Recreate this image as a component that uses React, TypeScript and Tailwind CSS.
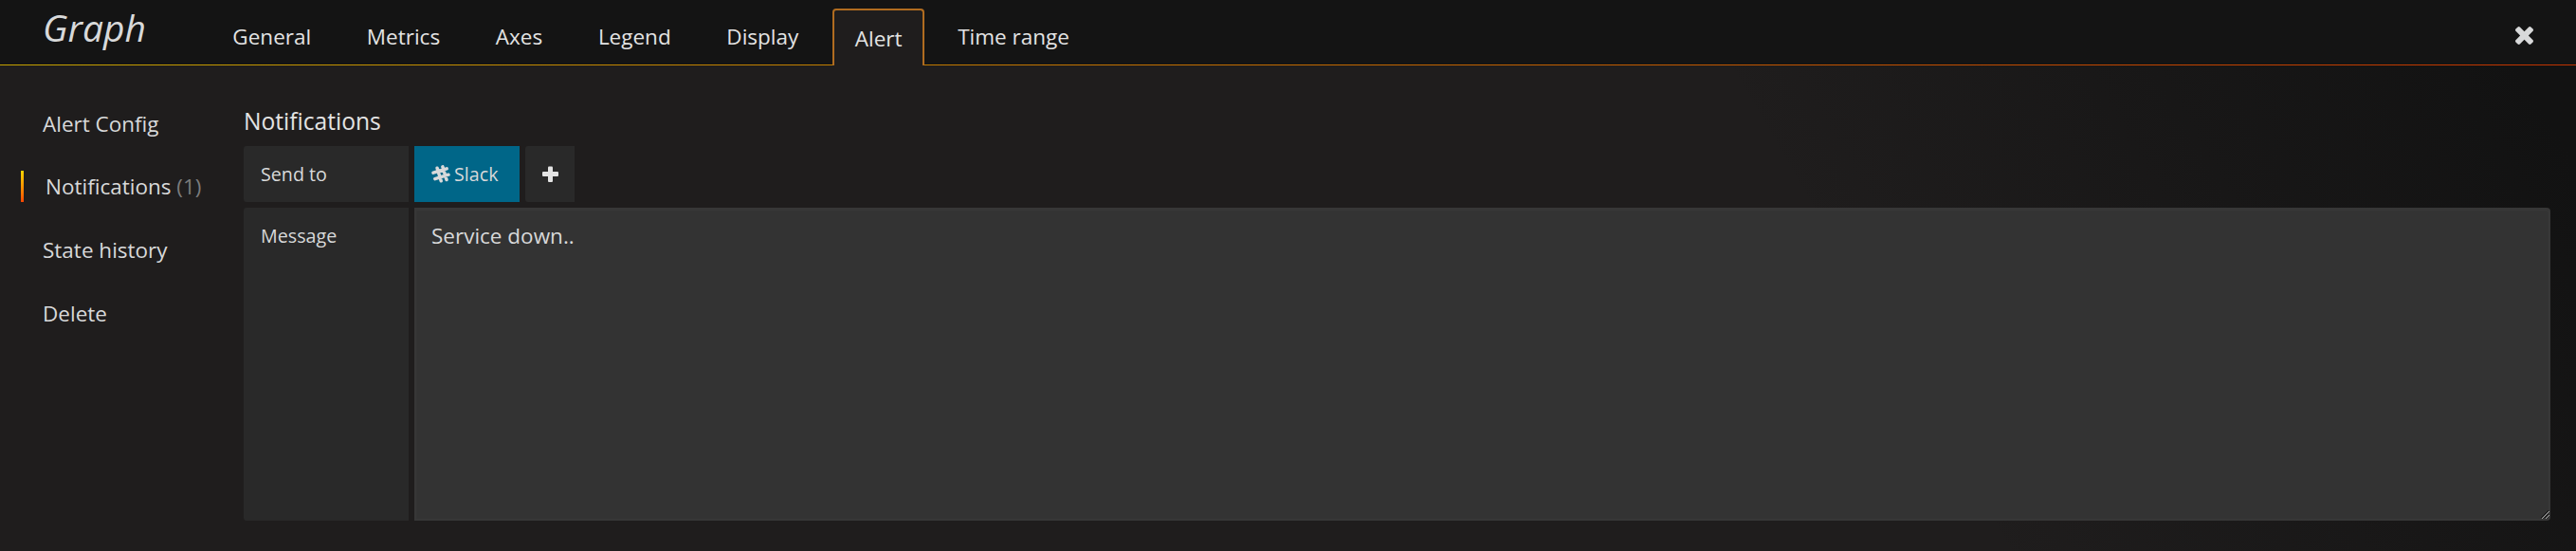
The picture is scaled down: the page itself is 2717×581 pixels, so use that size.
import React from "react";

const tabsBefore = ["General", "Metrics", "Axes", "Legend", "Display"];

function SlackMark() {
  return (
    <svg viewBox="0 0 20 20" className="h-[20px] w-[20px]" fill="none" stroke="#d8d9da" strokeWidth="3.5" strokeLinecap="round">
      <path d="M6.1 3.2 10.2 16.8M11.9 1.9 16 15.5M2 8.2 16.2 3.9M3.8 14.6 18 10.2" />
    </svg>
  );
}

function PlusMark() {
  return (
    <svg viewBox="0 0 17 17" className="h-[17px] w-[17px]" fill="#e3e3e3">
      <rect x="0" y="6" width="17" height="5" rx="1.1" />
      <rect x="6" y="0.5" width="5" height="16.5" rx="1.1" />
    </svg>
  );
}

function CloseMark() {
  return (
    <svg viewBox="110 258 1188 1188" className="h-[19px] w-[19px]" fill="#d8d9da">
      <path d="M1298 1214q0 40-28 68l-136 136q-28 28-68 28t-68-28l-294-294-294 294q-28 28-68 28t-68-28l-136-136q-28-28-28-68t28-68l294-294-294-294q-28-28-28-68t28-68l136-136q28-28 68-28t68 28l294 294 294-294q28-28 68-28t68 28l136 136q28 28 28 68t-28 68l-294 294 294 294q28 28 28 68z" />
    </svg>
  );
}

function Tab({ label }: { label: string }) {
  return <li className="px-[29.35px] pt-[23px] leading-[31px]">{label}</li>;
}

export default function App() {
  return (
    <div className="flex h-[581px] w-[2717px] flex-col bg-[#1f1d1d] font-['Open_Sans',sans-serif] text-[22.5px] text-[#d8d9da]">
      <header className="flex h-[69px] shrink-0 items-start bg-[#141414] bg-[linear-gradient(to_right,#c4a200,#c03300)] bg-[length:100%_1px] bg-bottom bg-no-repeat">
        <h2 className="w-[216px] pl-[45px] pt-[3px] text-[39px] italic leading-[52px]">Graph</h2>
        <ul className="flex h-[69px] items-start text-[#e3e3e3]">
          {tabsBefore.map((t) => (
            <Tab key={t} label={t} />
          ))}
          <li className="ml-[6.5px] mt-[9px] h-[60px] w-[97px] rounded-t-[4px] border-2 border-b-0 border-[#b06c20] bg-[#1f1d1d] pt-[14px] text-center leading-[31px]">
            Alert
          </li>
          <li className="pl-[35px] pt-[23px] leading-[31px]">Time range</li>
        </ul>
        <button className="ml-auto mr-[45px] mt-[28px]" aria-label="Close">
          <CloseMark />
        </button>
      </header>

      <div className="flex min-h-0 flex-1 items-start bg-[linear-gradient(60deg,transparent_70%,#121212_98%)] pr-[27px]">
        <aside className="flex h-full w-[257px] shrink-0 flex-col pt-[46px]">
          <span className="h-[66.5px] pl-[45px] leading-[31px]">Alert Config</span>
          <div className="flex h-[66.5px] pl-[22px]">
            <i className="mt-[-1.5px] h-[33px] w-[3px] bg-linear-to-b from-[#ffd500] to-[#ff4400]" />
            <span className="mt-[-0.5px] pl-[23px] leading-[31px]">
              Notifications <span className="text-[#7b7b7b]">(1)</span>
            </span>
          </div>
          <span className="h-[67px] pl-[45px] leading-[31px]">State history</span>
          <span className="pl-[45px] leading-[31px]">Delete</span>
        </aside>

        <main className="flex flex-1 flex-col">
          <h5 className="h-[85px] pt-[41px] text-[24.6px] leading-[36px] text-[#e3e3e3]">Notifications</h5>
          <div className="flex h-[59px] gap-[6px] text-[19.7px] leading-[59px]">
            <label className="w-[174px] rounded-l-[3px] bg-[#292929] pl-[18px]">Send to</label>
            <span className="flex w-[111px] items-center gap-[4px] bg-[#006688] pl-[18px]">
              <SlackMark />
              Slack
            </span>
            <button className="flex w-[52px] items-center justify-center rounded-l-[3px] bg-[#292929]" aria-label="Add">
              <PlusMark />
            </button>
          </div>
          <div className="relative mt-[6px] flex h-[330px] gap-[6px]">
            <label className="w-[174px] shrink-0 rounded-l-[3px] bg-[#292929] pl-[18px] text-[19.7px] leading-[59px]">Message</label>
            <textarea
              className="block h-[330px] flex-1 resize-none rounded-r-[4px] border-2 border-[#373737] bg-[#333333] px-[16px] py-[12px] leading-[31px] shadow-[inset_0_1px_2px_rgba(255,255,255,0.03)] outline-none"
              defaultValue="Service down.."
              spellCheck={false}
            />
            <svg viewBox="0 0 9 9" className="pointer-events-none absolute bottom-[2px] right-[1px] h-[9px] w-[9px]" fill="none">
              <path d="M0 8 8 0M4 8 8 4" stroke="#171717" strokeWidth="1" />
              <path d="M1 9 9 1M5 9 9 5" stroke="#b8b8b8" strokeWidth="0.9" />
            </svg>
          </div>
        </main>
      </div>
    </div>
  );
}
